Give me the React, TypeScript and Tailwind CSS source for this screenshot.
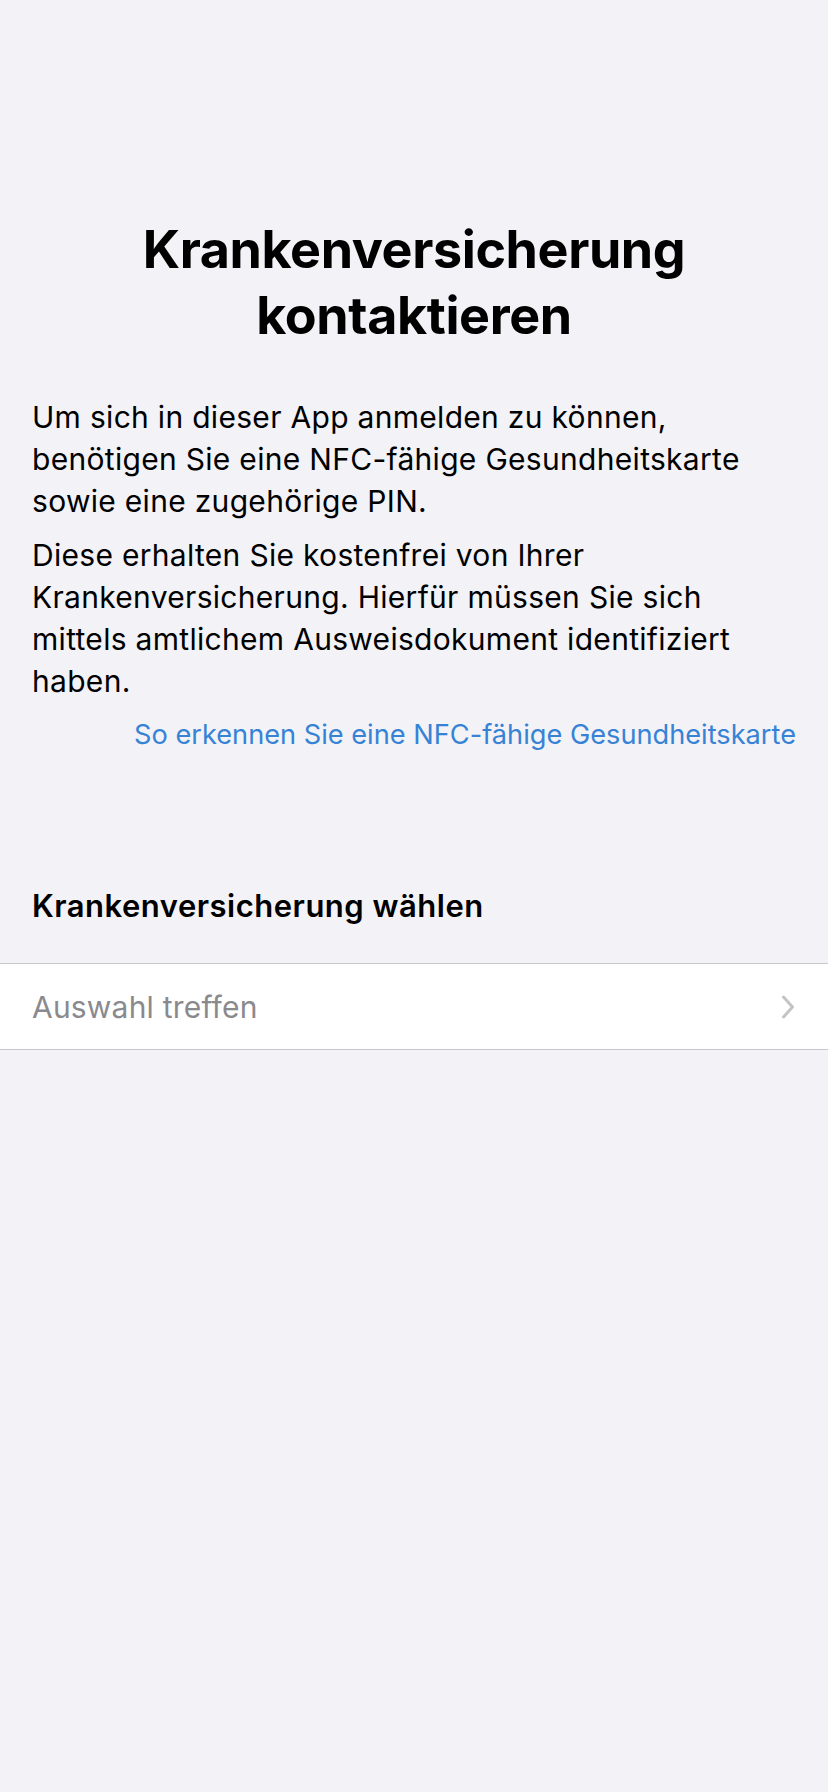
import React from "react";

export default function App() {
  return (
    <div
      className="min-h-[1792px] w-[828px] bg-[#f2f2f7] text-black"
      style={{ fontFamily: "Inter, 'Liberation Sans', sans-serif" }}
    >
      <div className="pt-[217px] px-8">
        <h1 className="text-center text-[52px] leading-[66px] font-bold tracking-[-0.4px]">
          Krankenversicherung
          <br />
          kontaktieren
        </h1>
        <p className="mt-[47px] max-w-[745px] text-[30px] leading-[42px] tracking-[0.3px]">
          Um sich in dieser App anmelden zu können, benötigen Sie eine NFC-fähige Gesundheitskarte sowie eine zugehörige PIN.
        </p>
        <p className="mt-[12px] max-w-[745px] text-[30px] leading-[42px] tracking-[0.3px]">
          Diese erhalten Sie kostenfrei von Ihrer Krankenversicherung. Hierfür müssen Sie sich mittels amtlichem Ausweisdokument identifiziert haben.
        </p>
        <p className="mt-[15px] text-right text-[27.2px] leading-[36px] text-[#3683d6]">
          So erkennen Sie eine NFC-fähige Gesundheitskarte
        </p>
        <h2 className="mt-[135px] text-[31px] leading-[36px] font-semibold tracking-[0.5px]">
          Krankenversicherung wählen
        </h2>
      </div>
      <div className="mt-[39px] flex h-[87px] items-center justify-between border-y border-[#c8c7cc] bg-white pl-8 pr-[33px]">
        <span className="text-[30px] leading-[36px] tracking-[0.2px] text-[#8a8a8e]">Auswahl treffen</span>
        <svg width="14" height="24" viewBox="0 0 14 24" fill="none">
          <path
            d="M2.5 2 L11.5 12 L2.5 22"
            stroke="#c4c4c7"
            strokeWidth="3"
            strokeLinecap="round"
            strokeLinejoin="round"
          />
        </svg>
      </div>
    </div>
  );
}
